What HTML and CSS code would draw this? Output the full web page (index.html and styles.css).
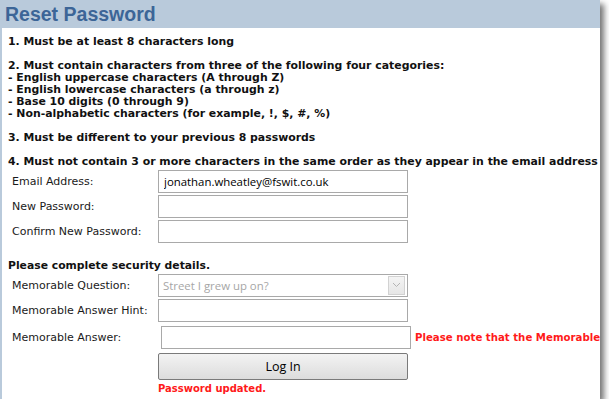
FILE: index.html
```html
<!DOCTYPE html>
<html lang="en">
<head>
  <meta charset="UTF-8">
  <title>Reset Password</title>
  <link rel="stylesheet" href="styles.css">
</head>
<body>
  <div class="window">
    <div class="header">
      <h1>Reset Password</h1>
    </div>
    <div class="content">
      <div class="rules">
        1. Must be at least 8 characters long<br><br>
        2. Must contain characters from three of the following four categories:<br>
        - English uppercase characters (A through Z)<br>
        - English lowercase characters (a through z)<br>
        - Base 10 digits (0 through 9)<br>
        - Non-alphabetic characters (for example, !, $, #, %)<br><br>
        3. Must be different to your previous 8 passwords<br><br>
        4. Must not contain 3 or more characters in the same order as they appear in the email address
      </div>

      <div class="form">
        <label class="label">Email Address:</label>
        <div class="field"><input class="input" type="text" value="jonathan.wheatley@fswit.co.uk"></div>

        <label class="label">New Password:</label>
        <div class="field"><input class="input" type="password"></div>

        <label class="label">Confirm New Password:</label>
        <div class="field"><input class="input" type="password"></div>
      </div>

      <div class="section-title">Please complete security details.</div>

      <div class="form security">
        <label class="label">Memorable Question:</label>
        <div class="field">
          <div class="select disabled">
            <span>Street I grew up on?</span>
            <span class="arrow">
              <svg width="9" height="6" viewBox="0 0 9 6"><path d="M1 1 L4.5 4.5 L8 1" fill="none" stroke="#b4b4b4" stroke-width="1"/></svg>
            </span>
          </div>
        </div>

        <label class="label">Memorable Answer Hint:</label>
        <div class="field"><input class="input" type="text"></div>

        <label class="label answer-label">Memorable Answer:</label>
        <div class="field answer">
          <input class="input" type="password">
          <span class="note">Please note that the Memorable Answer is case sensitive</span>
        </div>

        <div></div>
        <div class="field"><button class="button">Log In</button></div>

        <div></div>
        <div class="status">Password updated.</div>
      </div>
    </div>
  </div>
</body>
</html>
```

FILE: styles.css
```css
body {
  margin: 0;
  padding: 0;
  background: #ffffff;
  font-family: "DejaVu Sans", Verdana, sans-serif;
}

.window {
  width: 598px;
  height: 399px;
  border-left: 2px solid #b9cadb;
  background: #ffffff;
  box-shadow: 4px 4px 6px rgba(0, 0, 0, 0.55);
  overflow: hidden;
}

.header {
  height: 28px;
  background-color: #b9cadb;
  padding-left: 3px;
}

h1 {
  margin: 0;
  font-family: "Liberation Sans", Arial, sans-serif;
  font-size: 19.5px;
  line-height: 29px;
  font-weight: bold;
  color: #3c6597;
}

.content {
  padding: 8px 0 0 6px;
}

.rules {
  font-size: 10.9px;
  line-height: 12px;
  font-weight: bold;
  color: #111111;
  white-space: nowrap;
}

.form {
  display: grid;
  grid-template-columns: 150px 1fr;
  align-items: center;
  margin-top: 1px;
  row-gap: 1px;
}

.label {
  font-size: 11px;
  color: #1a1a1a;
  padding-left: 4px;
}

.field {
  display: flex;
  align-items: center;
  height: 24px;
}

.input {
  box-sizing: border-box;
  width: 250px;
  height: 23px;
  margin: 0;
  padding: 0 5px;
  border: 1px solid #a9a9a9;
  font-family: "Open Sans", "Noto Sans", sans-serif;
  font-size: 11.4px;
  color: #000000;
  background: #ffffff;
}

.section-title {
  font-size: 10.8px;
  line-height: 12px;
  font-weight: bold;
  color: #111111;
  margin-top: 17px;
}

.security {
  margin-top: 1px;
  row-gap: 1px;
}

.select {
  box-sizing: border-box;
  width: 250px;
  height: 23px;
  border: 1px solid #a9a9a9;
  display: flex;
  align-items: center;
  justify-content: space-between;
  padding: 0 2px 0 4px;
  font-family: "Open Sans", "Noto Sans", sans-serif;
  font-size: 11.4px;
  color: #a6a6a6;
}

.arrow {
  width: 15px;
  height: 17px;
  border: 1px solid #d2d2d2;
  background: linear-gradient(#f4f4f4, #e6e6e6);
  display: flex;
  align-items: center;
  justify-content: center;
}

.answer {
  height: 28px;
  padding-left: 3px;
  gap: 4px;
}

.note {
  font-size: 10.2px;
  font-weight: bold;
  color: #ff1a1a;
  white-space: nowrap;
}

.button {
  box-sizing: border-box;
  width: 250px;
  height: 27px;
  margin-top: 4px;
  border: 1px solid #7a7a7a;
  border-radius: 2px;
  background: linear-gradient(#f3f3f3, #dcdcdc);
  font-family: "Open Sans", "Noto Sans", sans-serif;
  font-size: 12.5px;
  color: #000000;
}

.status {
  font-size: 10px;
  font-weight: bold;
  color: #ff1a1a;
  margin-top: 6px;
}
```
